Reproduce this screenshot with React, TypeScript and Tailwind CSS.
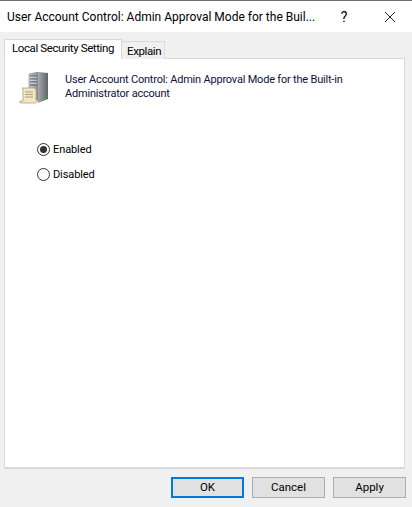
import React from "react";

const font = "font-['Roboto','Open_Sans',sans-serif]";

const ServerIcon = () => (
  <svg width="32" height="32" viewBox="0 0 32 32" className="shrink-0">
    <defs>
      <linearGradient id="front" x1="0" y1="0" x2="1" y2="0">
        <stop offset="0" stopColor="#c9ccd0" />
        <stop offset="1" stopColor="#8b9096" />
      </linearGradient>
      <linearGradient id="side" x1="0" y1="0" x2="1" y2="0">
        <stop offset="0" stopColor="#a4a9ad" />
        <stop offset="1" stopColor="#5f6469" />
      </linearGradient>
    </defs>
    <path d="M10 2 L19 0 L19 29 L10 27 Z" fill="url(#front)" stroke="#6f7478" strokeWidth="0.5" />
    <path d="M19 0 L29 1 L29 27 L19 31 Z" fill="url(#side)" />
    <path d="M11 4 H18 M11 7 H18 M11 10 H18 M11 13 H18" stroke="#565b60" strokeWidth="1.2" />
    <path d="M11 5.2 H18 M11 8.2 H18 M11 11.2 H18" stroke="#eef0f1" strokeWidth="0.6" />
    <rect x="24" y="25" width="2" height="2" fill="#37b24d" />
    <path d="M3 16 H15 Q17 16 17 18 V28 H19 Q18 31 16 31 H2 Q0 31 1 29 H4 V18 Q4 16 3 16 Z" fill="#f3e6bf" stroke="#a9976b" strokeWidth="0.7" />
    <path d="M6 20 H14 M6 22.5 H14 M6 25 H14" stroke="#9a9a8c" strokeWidth="0.9" />
  </svg>
);

const Radio = ({ checked, label }: { checked?: boolean; label: string }) => (
  <div className="flex items-center h-[14px]">
    <span className="w-[13px] h-[13px] rounded-full border border-[#333333] bg-white flex items-center justify-center">
      {checked && <span className="w-[7px] h-[7px] rounded-full bg-[#333333]" />}
    </span>
    <span className="ml-[3px] text-[11px] tracking-[-0.1px] text-black leading-none">{label}</span>
  </div>
);

const Btn = ({ label, primary }: { label: string; primary?: boolean }) => (
  <button
    className={`w-[73px] h-[21px] bg-[#e1e1e1] text-[11.5px] leading-none text-black ${
      primary ? "border-2 border-[#0078d7]" : "border border-[#adadad]"
    }`}
  >
    {label}
  </button>
);

export default function App() {
  return (
    <div className={`${font} w-[412px] h-[507px] bg-[#f0f0f0] flex flex-col overflow-hidden`}>
      <div className="h-[32px] shrink-0 bg-white border-t border-[#6e6e6e] flex items-center">
        <span className="ml-[7px] w-[320px] whitespace-nowrap text-[12px] text-black">
          User Account Control: Admin Approval Mode for the Buil...
        </span>
        <span className="ml-[12px] w-[10px] text-[14px] text-black text-center leading-none">?</span>
        <svg width="12" height="12" viewBox="0 0 12 12" className="ml-[35px]">
          <path d="M1 1 L11 11 M11 1 L1 11" stroke="#222222" strokeWidth="1" fill="none" />
        </svg>
      </div>
      <div className="pl-[4px] pr-[7px] pt-[7px] flex flex-col">
        <div className="flex items-end h-[20px] relative z-10">
          <div className="w-[118px] h-[20px] bg-white border border-b-0 border-[#d9d9d9] pl-[7px] text-[11.5px] tracking-[-0.4px] whitespace-nowrap text-black leading-[17px]">
            Local Security Setting
          </div>
          <div className="w-[43px] h-[18px] bg-[#f0f0f0] border border-l-0 border-b-0 border-[#d9d9d9] pl-[5px] text-[11.5px] tracking-[-0.4px] whitespace-nowrap text-black leading-[19px]">
            Explain
          </div>
        </div>
        <div className="h-[411px] -mt-px bg-white border border-[#d9d9d9] border-b-2 pl-[14px] pt-[13px]">
          <div className="flex items-start">
            <ServerIcon />
            <p className="ml-[14px] mt-px text-[11px] leading-[14px] tracking-[-0.2px] whitespace-nowrap text-[#10103a]">
              User Account Control: Admin Approval Mode for the Built-in
              <br />
              Administrator account
            </p>
          </div>
          <div className="ml-[18px] mt-[38px] flex flex-col gap-[11px]">
            <Radio checked label="Enabled" />
            <Radio label="Disabled" />
          </div>
        </div>
      </div>
      <div className="flex justify-end gap-[8px] pr-[6px] mt-[8px]">
        <Btn primary label="OK" />
        <Btn label="Cancel" />
        <Btn label="Apply" />
      </div>
    </div>
  );
}
